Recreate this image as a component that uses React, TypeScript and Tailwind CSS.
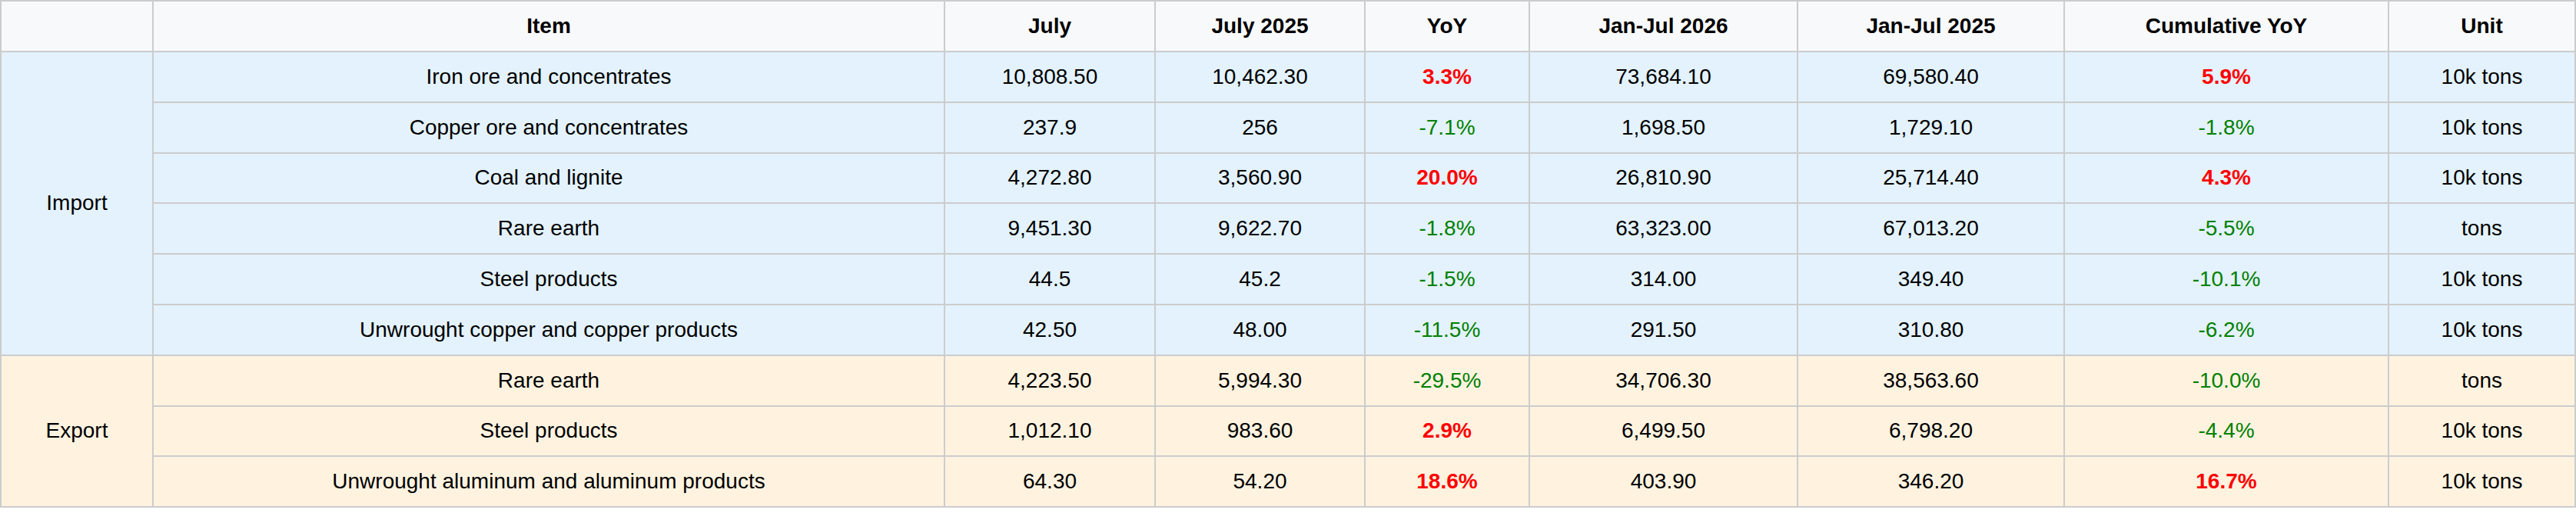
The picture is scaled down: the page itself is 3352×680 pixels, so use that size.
const cols = [
  "w-[200px]",
  "w-[1030px]",
  "w-[274px]",
  "w-[273px]",
  "w-[214px]",
  "w-[349px]",
  "w-[347px]",
  "w-[422px]",
  "w-[243px]",
];

const headers = [
  "",
  "Item",
  "July",
  "July 2025",
  "YoY",
  "Jan-Jul 2026",
  "Jan-Jul 2025",
  "Cumulative YoY",
  "Unit",
];

type Row = {
  item: string;
  july: string;
  july25: string;
  yoy: string;
  ytd: string;
  ytd25: string;
  cum: string;
  unit: string;
};

const groups: { label: string; bg: string; rows: Row[] }[] = [
  {
    label: "Import",
    bg: "bg-[#e3f2fd]",
    rows: [
      { item: "Iron ore and concentrates", july: "10,808.50", july25: "10,462.30", yoy: "3.3%", ytd: "73,684.10", ytd25: "69,580.40", cum: "5.9%", unit: "10k tons" },
      { item: "Copper ore and concentrates", july: "237.9", july25: "256", yoy: "-7.1%", ytd: "1,698.50", ytd25: "1,729.10", cum: "-1.8%", unit: "10k tons" },
      { item: "Coal and lignite", july: "4,272.80", july25: "3,560.90", yoy: "20.0%", ytd: "26,810.90", ytd25: "25,714.40", cum: "4.3%", unit: "10k tons" },
      { item: "Rare earth", july: "9,451.30", july25: "9,622.70", yoy: "-1.8%", ytd: "63,323.00", ytd25: "67,013.20", cum: "-5.5%", unit: "tons" },
      { item: "Steel products", july: "44.5", july25: "45.2", yoy: "-1.5%", ytd: "314.00", ytd25: "349.40", cum: "-10.1%", unit: "10k tons" },
      { item: "Unwrought copper and copper products", july: "42.50", july25: "48.00", yoy: "-11.5%", ytd: "291.50", ytd25: "310.80", cum: "-6.2%", unit: "10k tons" },
    ],
  },
  {
    label: "Export",
    bg: "bg-[#fff3e0]",
    rows: [
      { item: "Rare earth", july: "4,223.50", july25: "5,994.30", yoy: "-29.5%", ytd: "34,706.30", ytd25: "38,563.60", cum: "-10.0%", unit: "tons" },
      { item: "Steel products", july: "1,012.10", july25: "983.60", yoy: "2.9%", ytd: "6,499.50", ytd25: "6,798.20", cum: "-4.4%", unit: "10k tons" },
      { item: "Unwrought aluminum and aluminum products", july: "64.30", july25: "54.20", yoy: "18.6%", ytd: "403.90", ytd25: "346.20", cum: "16.7%", unit: "10k tons" },
    ],
  },
];

// separate border model so row pitch stays exact
const cell = "border-r-2 border-b-2 border-[#cccccc] px-4 text-center align-middle";

function Change({ v }: { v: string }) {
  const down = v.startsWith("-");
  return (
    <span className={down ? "text-[#008000]" : "font-bold text-[#ff0000]"}>{v}</span>
  );
}

export default function App() {
  return (
    <div className="h-[680px] w-[3352px] bg-white font-['Liberation_Sans',Arial,sans-serif] text-[28px] leading-[32px] text-black">
      <table className="w-[3352px] table-fixed border-separate border-spacing-0">
        <colgroup>
          {cols.map((c, i) => (
            <col key={i} className={c} />
          ))}
        </colgroup>
        <thead>
          <tr className="h-[68px] bg-[#f8f9fa]">
            {headers.map((h, i) => (
              <th key={i} className={`${cell} border-t-2 font-bold ${i === 0 ? "border-l-2" : ""}`}>
                {h}
              </th>
            ))}
          </tr>
        </thead>
        <tbody>
          {groups.map((g) =>
            g.rows.map((r, i) => (
              <tr key={g.label + i} className={`h-[65.8px] ${g.bg}`}>
                {i === 0 && (
                  <td rowSpan={g.rows.length} className={`${cell} border-l-2`}>
                    {g.label}
                  </td>
                )}
                <td className={cell}>{r.item}</td>
                <td className={cell}>{r.july}</td>
                <td className={cell}>{r.july25}</td>
                <td className={cell}>
                  <Change v={r.yoy} />
                </td>
                <td className={cell}>{r.ytd}</td>
                <td className={cell}>{r.ytd25}</td>
                <td className={cell}>
                  <Change v={r.cum} />
                </td>
                <td className={cell}>{r.unit}</td>
              </tr>
            ))
          )}
        </tbody>
      </table>
    </div>
  );
}
